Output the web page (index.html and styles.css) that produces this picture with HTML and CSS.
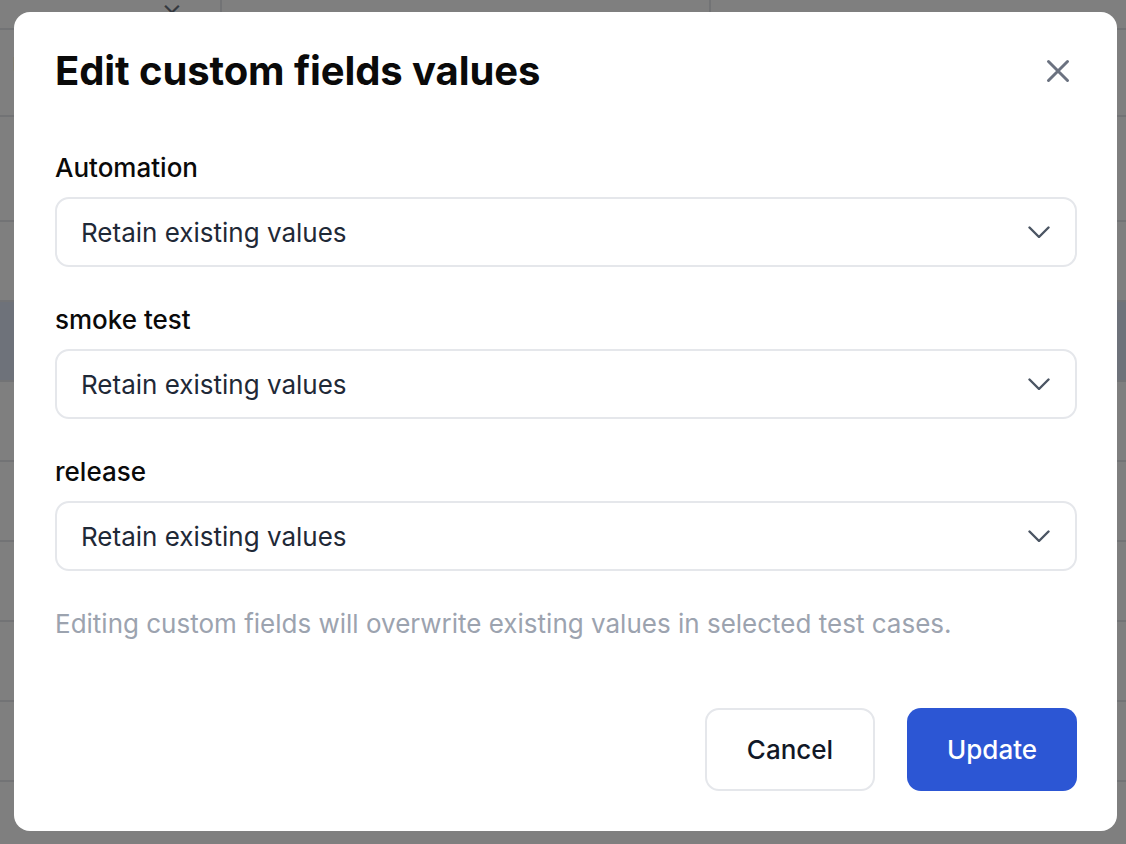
FILE: index.html
```html
<!DOCTYPE html>
<html lang="en">

<head>
    <meta charset="UTF-8">
    <meta name="viewport" content="width=device-width, initial-scale=1.0">
    <title>Edit custom fields values</title>
    <link rel="stylesheet" href="styles.css">
</head>

<body>
    <!-- page behind the dialog -->
    <div class="page">
        <div class="page-head">
            <div class="cell c1"><span class="caret">&#8964;</span></div>
            <div class="cell c2"></div>
            <div class="cell c3"></div>
        </div>
        <div class="row r-a">
            <div class="cell c1">Users</div>
            <div class="cell c2"></div>
            <div class="cell c3"></div>
        </div>
        <div class="row r-b">
            <div class="cell c1"></div>
            <div class="cell c2"></div>
            <div class="cell c3"></div>
        </div>
        <div class="row">
            <div class="cell c1"></div>
            <div class="cell c2"></div>
            <div class="cell c3"></div>
        </div>
        <div class="row selected">
            <div class="cell c1"></div>
            <div class="cell c2"></div>
            <div class="cell c3">Order</div>
        </div>
        <div class="row">
            <div class="cell c1"></div>
            <div class="cell c2"></div>
            <div class="cell c3"></div>
        </div>
        <div class="row">
            <div class="cell c1"></div>
            <div class="cell c2"></div>
            <div class="cell c3">Checkout</div>
        </div>
        <div class="row">
            <div class="cell c1"></div>
            <div class="cell c2"></div>
            <div class="cell c3">Card</div>
        </div>
        <div class="row">
            <div class="cell c1"></div>
            <div class="cell c2"></div>
            <div class="cell c3">Payments</div>
        </div>
        <div class="row">
            <div class="cell c1"></div>
            <div class="cell c2"></div>
            <div class="cell c3">Payment<br>The "Cash on Delivery"</div>
        </div>
    </div>

    <div class="overlay">
        <div class="modal">
            <div class="modal-header">
                <h2>Edit custom fields values</h2>
                <button type="button" class="close-btn">
                    <svg width="24" height="24" viewBox="0 0 24 24" fill="none" stroke="#6b7280" stroke-width="3" stroke-linecap="round">
                        <path d="M2.5 2.5l19 19M21.5 2.5l-19 19" />
                    </svg>
                </button>
            </div>

            <div class="field">
                <label>Automation</label>
                <div class="select">
                    <span>Retain existing values</span>
                    <svg width="22" height="12" viewBox="0 0 22 12" fill="none" stroke="#4b5563" stroke-width="2.4" stroke-linecap="round" stroke-linejoin="round">
                        <path d="M1.5 1.5l9.5 9.5 9.5-9.5" />
                    </svg>
                </div>
            </div>
            <div class="field">
                <label>smoke test</label>
                <div class="select">
                    <span>Retain existing values</span>
                    <svg width="22" height="12" viewBox="0 0 22 12" fill="none" stroke="#4b5563" stroke-width="2.4" stroke-linecap="round" stroke-linejoin="round">
                        <path d="M1.5 1.5l9.5 9.5 9.5-9.5" />
                    </svg>
                </div>
            </div>
            <div class="field">
                <label>release</label>
                <div class="select">
                    <span>Retain existing values</span>
                    <svg width="22" height="12" viewBox="0 0 22 12" fill="none" stroke="#4b5563" stroke-width="2.4" stroke-linecap="round" stroke-linejoin="round">
                        <path d="M1.5 1.5l9.5 9.5 9.5-9.5" />
                    </svg>
                </div>
            </div>

            <p class="hint">Editing custom fields will overwrite existing values in selected test cases.</p>

            <div class="modal-footer">
                <button type="button" class="btn btn-cancel">Cancel</button>
                <button type="button" class="btn btn-primary">Update</button>
            </div>
        </div>
    </div>
</body>

</html>
```

FILE: styles.css
```css
* {
    padding: 0;
    margin: 0;
    box-sizing: border-box;
}

body {
    font-family: Inter, "Noto Sans", sans-serif;
    background: #ffffff;
    color: #111827;
    width: 1126px;
    height: 844px;
    overflow: hidden;
}

/* background page */
.page {
    width: 1126px;
}

.page-head,
.row {
    display: flex;
    height: 80px;
    border-bottom: 2px solid #e5e7eb;
}

.page-head {
    height: 30px;
}

.row.r-a {
    height: 87px;
}

.row.r-b {
    height: 105px;
}

.row.selected {
    background: #dde5f5;
}

.cell {
    font-size: 26px;
    padding: 20px 12px;
    line-height: 34px;
    color: #111111;
}

.page-head .cell {
    padding: 0 12px;
    line-height: 10px;
    text-align: right;
}

.c1 {
    width: 222px;
    border-right: 2px solid #e5e7eb;
}

.c2 {
    width: 489px;
    border-right: 2px solid #e5e7eb;
}

.c3 {
    flex: 1;
    padding-left: 177px;
    white-space: nowrap;
}

.caret {
    color: #6b7280;
    margin-right: 26px;
}

/* dialog */
.overlay {
    position: fixed;
    inset: 0;
    background: rgba(0, 0, 0, 0.5);
    display: flex;
    align-items: flex-start;
    padding: 12px 0 0 14px;
}

.modal {
    width: 1103px;
    height: 819px;
    background: #ffffff;
    border-radius: 16px;
    padding: 39px 40px 40px 41px;
}

.modal-header {
    display: flex;
    align-items: center;
    justify-content: space-between;
    height: 40px;
    margin-bottom: 64px;
}

.modal-header h2 {
    font-size: 40px;
    line-height: 40px;
    font-weight: 700;
    color: #0a0a0a;
    letter-spacing: -0.1px;
}

.close-btn {
    background: none;
    border: none;
    width: 24px;
    height: 24px;
    margin-right: 7px;
    display: flex;
}

.field {
    margin-bottom: 40px;
}

.field label {
    display: block;
    font-size: 26px;
    line-height: 26px;
    font-weight: 500;
    color: #0a0a0a;
    margin-bottom: 16px;
}

.select {
    height: 70px;
    border: 2px solid #e5e7eb;
    border-radius: 14px;
    display: flex;
    align-items: center;
    justify-content: space-between;
    padding: 0 25px 0 24px;
    font-size: 26px;
    color: #1f2937;
}

.hint {
    font-size: 26px;
    line-height: 26px;
    color: #9ca3af;
    margin-bottom: 71px;
}

.modal-footer {
    display: flex;
    justify-content: flex-end;
    gap: 32px;
}

.btn {
    width: 170px;
    height: 83px;
    border-radius: 14px;
    font-family: Inter, "Noto Sans", sans-serif;
    font-size: 26px;
    font-weight: 500;
}

.btn-cancel {
    background: #ffffff;
    border: 2px solid #e5e7eb;
    color: #111827;
}

.btn-primary {
    background: #2c56d4;
    border: none;
    color: #ffffff;
}
```
